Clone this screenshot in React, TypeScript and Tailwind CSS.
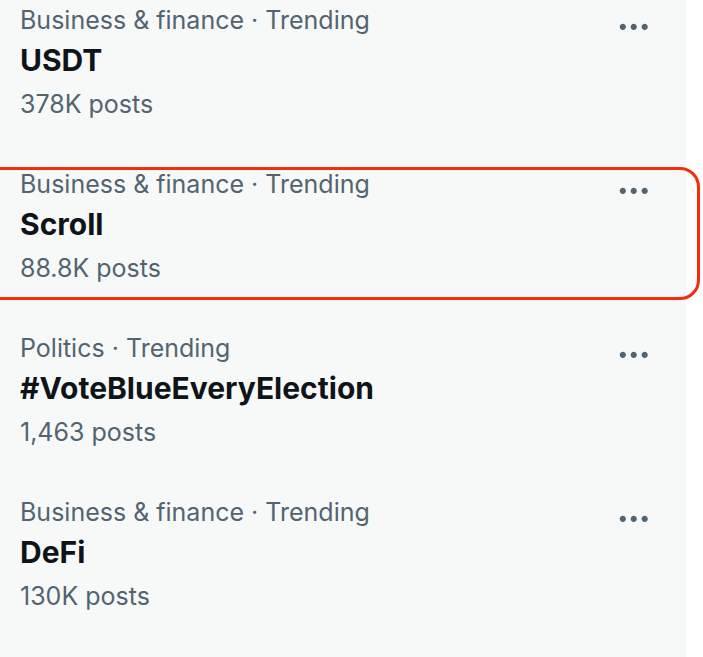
import React from "react";

const trends = [
  { cat: "Business & finance · Trending", title: "USDT", posts: "378K posts" },
  { cat: "Business & finance · Trending", title: "Scroll", posts: "88.8K posts", highlight: true },
  { cat: "Politics · Trending", title: "#VoteBlueEveryElection", posts: "1,463 posts" },
  { cat: "Business & finance · Trending", title: "DeFi", posts: "130K posts" },
];

function More() {
  return (
    <svg viewBox="0 0 24 24" className="w-[37.5px] h-[37.5px] shrink-0 mt-[4px]" fill="#536471">
      <path d="M3 12c0-1.1.9-2 2-2s2 .9 2 2-.9 2-2 2-2-.9-2-2zm9 2c1.1 0 2-.9 2-2s-.9-2-2-2-2 .9-2 2 .9 2 2 2zm7 0c1.1 0 2-.9 2-2s-.9-2-2-2-2 .9-2 2 .9 2 2 2z" />
    </svg>
  );
}

export default function App() {
  return (
    <div className="w-[703px] h-[657px] bg-white overflow-hidden flex" style={{ fontFamily: "Inter, 'Noto Sans', sans-serif" }}>
      <div className="w-[686px] h-[657px] min-h-[657px] bg-[#f7f9f9] shrink-0">
        <div className="-mt-[20px] flex flex-col">
          {trends.map((t, i) => (
            <div key={i} className="relative flex items-start justify-between pl-[20px] pr-[34px] py-[24px]">
              <div className="flex flex-col">
                <div className="text-[25px] leading-[32px] text-[#536471]">{t.cat}</div>
                <div className="mt-[4px] text-[30px] leading-[40px] font-bold text-[#0f1419]">{t.title}</div>
                <div className="mt-[8px] text-[25px] leading-[32px] text-[#536471]">{t.posts}</div>
              </div>
              <More />
              {t.highlight && (
                <div className="absolute left-[-30px] right-[-14px] top-[23px] bottom-[8px] border-[3px] border-[#f62d0c] rounded-[20px] pointer-events-none" />
              )}
            </div>
          ))}
        </div>
      </div>
    </div>
  );
}
